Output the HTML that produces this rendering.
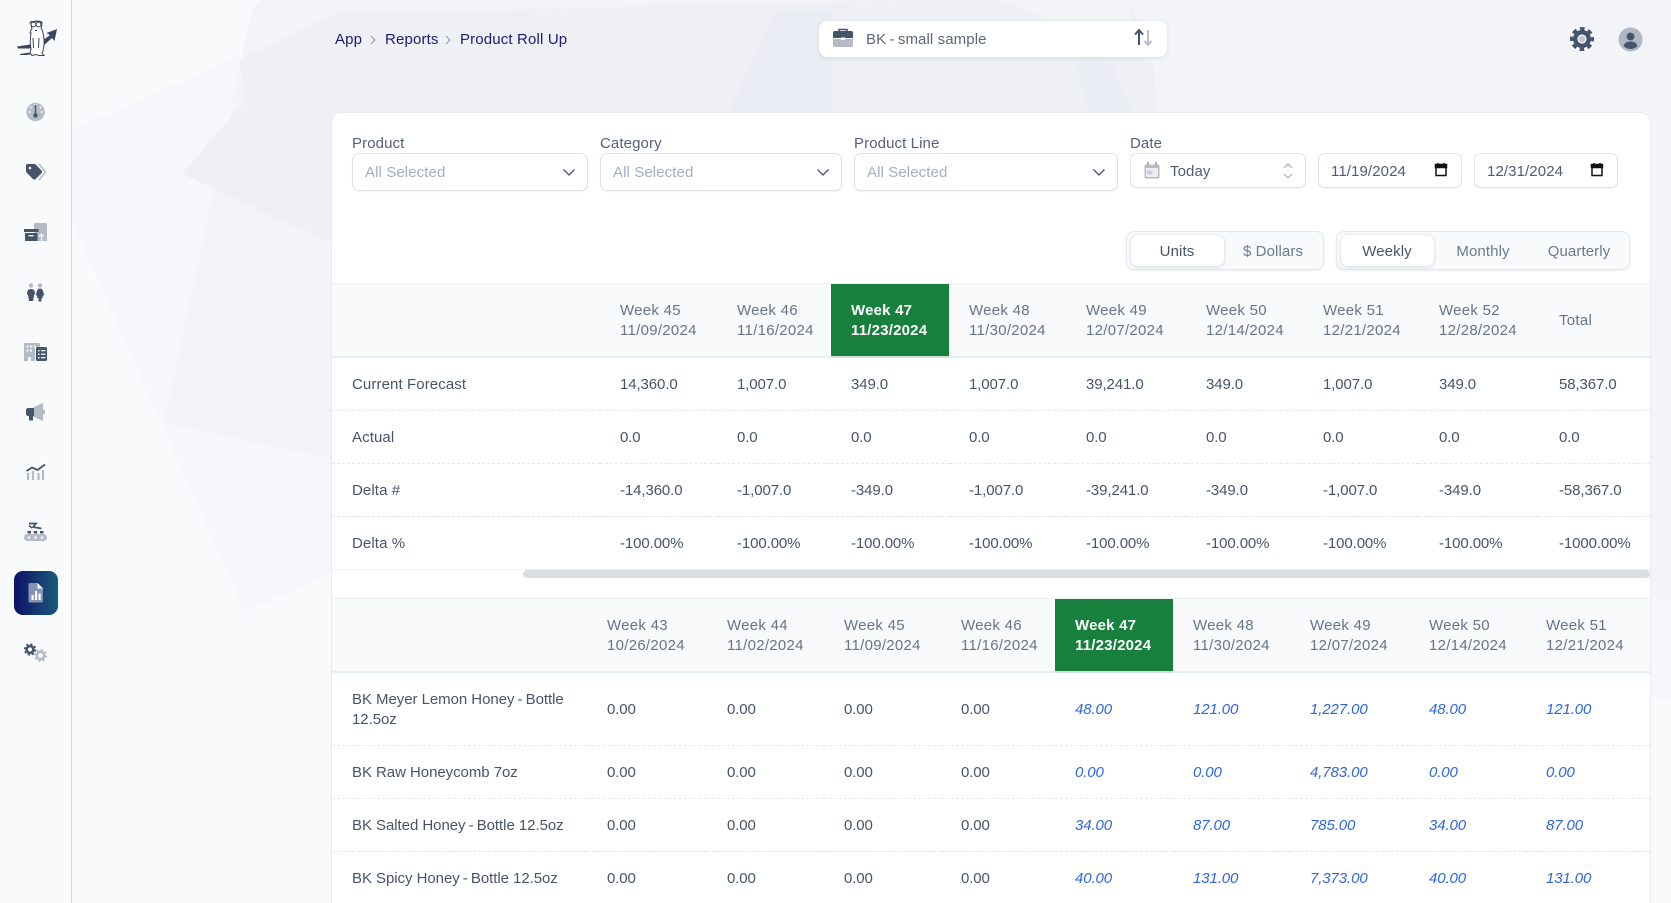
<!DOCTYPE html>
<html lang="en"><head><meta charset="utf-8"><title>Product Roll Up</title>
<style>
*{box-sizing:content-box}
html,body{margin:0;padding:0;width:1671px;height:903px;overflow:hidden;background:#f9fafc;font-family:"Liberation Sans",sans-serif;font-size:15px;color:#475569;letter-spacing:.1px}
#page{position:relative;width:1671px;height:903px;overflow:hidden}
.abs{position:absolute}
#bg{position:absolute;left:0;top:0}
#side{position:absolute;left:0;top:0;width:71px;height:903px;background:#f9fafc;border-right:1px solid #d3d8e3}
#side svg{position:absolute;left:0;top:0}
.tile{position:absolute;left:14px;top:571px;width:44px;height:44px;border-radius:9px;background:linear-gradient(90deg,#0e1266,#1a5a7c)}
.crumb{position:absolute;top:31px;line-height:18px;color:#1b1b6f;letter-spacing:.15px;white-space:nowrap}
#sel{position:absolute;left:819px;top:21px;width:348px;height:36px;background:#fff;border-radius:8px;box-shadow:0 1px 4px rgba(100,116,139,.18)}
#sel span{position:absolute;left:47px;top:10px;line-height:18px;color:#5b677b;letter-spacing:.1px}
#sel span u{position:static;text-decoration:none;word-spacing:-1px}
#card{position:absolute;left:332px;top:113px;width:1318px;height:790px;background:#fff;border-radius:9px 9px 0 0;box-shadow:0 0 0 1px #e7eaf2;overflow:visible}
.lbl{position:absolute;top:22px;line-height:18px;color:#556277}
.inp{position:absolute;top:40px;height:36px;background:#fff;border:1px solid #dfe3ec;border-radius:7px;box-shadow:0 1px 1px rgba(100,116,139,.08)}
.sl{border-color:#e3dfe4;height:36px}
.inp span{position:absolute;top:9px;line-height:20px;white-space:nowrap}
.ph{left:12px;color:#a3afc2}
.dt{color:#505d72}
.inp svg{position:absolute}
.grp{position:absolute;top:118px;height:37px;background:#f8fafc;border:1px solid #e3e7ef;border-radius:8px;box-shadow:0 1px 2px rgba(100,116,139,.12)}
.grp b{position:absolute;top:2px;height:31px;background:#fff;border:1px solid #e6e9f0;border-radius:8px;box-shadow:0 1px 2px rgba(100,116,139,.15)}
.tg{position:absolute;top:129px;line-height:20px;color:#6b7a90;transform:translateX(-50%);white-space:nowrap}
.tg.on{color:#475569}
table{position:absolute;left:0;border-collapse:separate;border-spacing:0;table-layout:fixed;width:1318px}
th{height:70px;padding:2px 0 0 20px;background:#f8fafc;border-top:1px solid #edf0f5;border-bottom:2px solid #e9edf5;text-align:left;font-weight:400;color:#677489;line-height:20px;white-space:nowrap;overflow:hidden;letter-spacing:.28px}
th.g{background:#17803d;color:#fff;font-weight:700;border-top-color:#edf0f5;border-bottom-color:#cfe0d6;letter-spacing:.2px}
td{padding:2px 0 0 20px;border-bottom:1px dashed #e4e7ec;line-height:20px;height:50px;white-space:nowrap;overflow:hidden;letter-spacing:-.1px}
td.l{letter-spacing:.1px}
td.p{letter-spacing:-.05px}
td.p u{text-decoration:none;word-spacing:-1px}
tr.tall td{height:70px}
td.f{font-style:italic;color:#2f65e0}
tr.last td{border-bottom:1px solid #eef0f5}
#bar{position:absolute;left:191px;top:457px;width:1127px;height:8px;border-radius:4px;background:#dcdde2}
</style></head><body><div id="page">
<svg id="bg" width="1671" height="903" viewBox="0 0 1671 903">
<rect width="1671" height="903" fill="#f9fafc"/>
<polygon points="72,130 334,14 360,0 1671,0 1671,700 332,573 245,612 72,222" fill="#f6f7fb"/>
<polygon points="252,10 260,0 1671,0 1671,600 332,459 164,423" fill="#f3f4f9"/>
<polygon points="182,174 252,92 300,60 420,30 560,35 700,100 780,113 332,243" fill="#eff0f5"/>
<polygon points="240,60 334,14 900,0 1150,0 1156,113 332,243 258,210" fill="#eff0f5"/>
<polygon points="728,113 776,10 832,10 833,113" fill="#ebedf5"/>
<polygon points="1073,58 1110,58 1132,113 1090,113" fill="#ebedf5"/>
<polygon points="1130,0 1500,0 1671,60 1671,113 1260,113 1150,60" fill="#f3f5f9"/>
<polygon points="1000,0 1130,0 1130,20 1120,48" fill="#f3f5f9"/>
</svg>

<div id="side">
<div class="tile"></div>
<svg width="71" height="903" viewBox="0 0 71 903">
<!-- logo -->
<path d="M17 46.500 L30 44.500 L42 41 L50 35 L46.500 33 L57 29 L54.500 41 L52 38 L43 46 L30 48.500 L18 48.500Z" fill="#3a4660"/>
<path d="M31 33c-1 6-1 11 0 16l-1 4-10 1.500h5l6-.5 1 1.500 4-1 3 1h5l-2-2.500 1-2c1.500-6 1.500-12 0-18-1-4-2-5-2-5l1-3c0-2-1-4-5-4s-6 2-6 4l1 4c-1 1-1.500 2-2 4z" fill="#fff" stroke="#39445c" stroke-width="1"/>
<circle cx="33.500" cy="24.500" r="2.400" fill="#fff" stroke="#39445c"/><circle cx="38.500" cy="24.500" r="2.400" fill="#fff" stroke="#39445c"/>
<path d="M29.500 23.500l1.500-2h10l1.500 2M35 30.500h2M33 38l.5 10M39 38l-.5 10" stroke="#39445c" stroke-width="1" fill="none"/>
<!-- gauge -->
<circle cx="35.500" cy="112" r="9.200" fill="#b5bbc6"/>
<g fill="#f4f5f8"><circle cx="35.500" cy="105" r="1"/><circle cx="30.500" cy="107.500" r="1"/><circle cx="40.500" cy="107.500" r="1"/><circle cx="29.500" cy="112" r="1"/><circle cx="41.500" cy="112" r="1"/></g>
<path d="M35.500 105V114" stroke="#44546a" stroke-width="1.400"/><circle cx="35.500" cy="115.500" r="2.200" fill="#44546a"/>
<!-- tags -->
<path d="M39 164l6.500 8-6.500 8" fill="none" stroke="#b5bbc6" stroke-width="1.600"/>
<path d="M27.500 164h6.500c.8 0 1.500.3 2 .9l5.500 5.600c.8.800.8 2 0 2.800l-5.800 5.700c-.8.800-2 .8-2.800 0l-6.300-6.400c-.4-.5-.6-1-.6-1.600v-5c0-1.100.4-2 1.500-2z" fill="#44546a"/>
<circle cx="30" cy="168" r="1.300" fill="#f4f5f8"/>
<!-- boxes -->
<path d="M35 223h11c.6 0 1 .4 1 1v17H34V224c0-.6.4-1 1-1z" fill="#b5bbc6"/>
<path d="M41.500 240.500v-6M39 236.500l2.500-2.500 2.500 2.500" stroke="#f4f5f8" stroke-width="1.300" fill="none"/>
<rect x="24" y="229" width="14.500" height="3" fill="#44546a"/><rect x="25" y="233" width="12.500" height="8" fill="#44546a"/>
<rect x="28.500" y="235" width="5" height="1.400" fill="#f4f5f8"/>
<!-- people -->
<circle cx="31" cy="285.500" r="2.200" fill="#b5bbc6"/><circle cx="40" cy="285.500" r="2.200" fill="#b5bbc6"/>
<path d="M27 294c0-3 1-5 4-5s4 2 4 5l-1 1v1l-1 5h-4l-1-6z" fill="#44546a"/>
<path d="M40 288.500c2.500 0 3 2 4.200 6.500l-1.700 1 .5 2h-1.500v3.500h-3V298h-1.500l.5-2-1.700-1c1.200-4.500 1.700-6.500 4.200-6.500z" fill="#44546a"/>
<!-- building -->
<path d="M25.500 343h13c.8 0 1.500.7 1.500 1.500V347h-3.500c-1 0-1.500.7-1.500 1.500V361h-4v-4h-3v4h-4v-16.500c0-.8.700-1.500 1.500-1.500z" fill="#b5bbc6"/>
<g fill="#f4f5f8"><rect x="26.500" y="345.500" width="2" height="2"/><rect x="30" y="345.500" width="2" height="2"/><rect x="33.500" y="345.500" width="2" height="2"/><rect x="26.500" y="349.500" width="2" height="2"/><rect x="30" y="349.500" width="2" height="2"/></g>
<rect x="36" y="347" width="11" height="14" rx="1.500" fill="#44546a"/>
<g fill="#f4f5f8"><rect x="38" y="350" width="1.500" height="1.500"/><rect x="41" y="350" width="4.500" height="1.300"/><rect x="38" y="353.500" width="1.500" height="1.500"/><rect x="41" y="353.500" width="4.500" height="1.300"/><rect x="38" y="357" width="1.500" height="1.500"/><rect x="41" y="357" width="4.500" height="1.300"/></g>
<!-- megaphone -->
<path d="M33 407.500l10-4.500v18l-10-4.500z" fill="#b5bbc6"/><rect x="43" y="409.500" width="2" height="5" rx="1" fill="#b5bbc6"/>
<path d="M28 408h6v8h-1v4.500h-4V416h-1c-1 0-2-1-2-2v-4c0-1 1-2 2-2z" fill="#44546a"/>
<!-- chart -->
<path d="M28 480v-7M33 480v-9M38.500 480v-7M43 480v-10" stroke="#b5bbc6" stroke-width="2.200"/>
<path d="M26.500 471l5.500-3.500 5.500 2.500 7.500-5.500" fill="none" stroke="#44546a" stroke-width="1.800"/>
<!-- conveyor -->
<rect x="24" y="534" width="23" height="7" rx="3.500" fill="#b5bbc6"/>
<g fill="#f4f5f8"><circle cx="29" cy="537.500" r="1.300"/><circle cx="35.500" cy="537.500" r="1.300"/><circle cx="42" cy="537.500" r="1.300"/></g>
<g fill="#44546a"><rect x="27.500" y="531" width="3.500" height="2.500"/><rect x="33.700" y="531" width="3.500" height="2.500"/><rect x="40" y="531" width="3.500" height="2.500"/></g>
<path d="M29 523.500h7l-3 3.500 8.500 1.500M29 525.500l3 2.500" fill="none" stroke="#44546a" stroke-width="1.700"/>
<!-- report -->
<path d="M30 583h7.500l5.500 5.500V601c0 1-.6 1.500-1.500 1.500H30c-.9 0-1.500-.5-1.500-1.500V584.500c0-1 .6-1.500 1.500-1.500z" fill="#8593b4"/>
<path d="M37.500 583l5.500 5.500h-5.500z" fill="#fff"/>
<g fill="#fff"><rect x="31.500" y="595" width="2.200" height="5"/><rect x="35" y="591" width="2.200" height="9"/><rect x="38.500" y="593.500" width="2.200" height="6.500"/></g>
<!-- cogs -->
<circle cx="40.500" cy="655.500" r="3.700" fill="none" stroke="#b5bbc6" stroke-width="2.600"/>
<circle cx="40.500" cy="655.500" r="5.600" fill="none" stroke="#b5bbc6" stroke-width="1.800" stroke-dasharray="2.200 2.200"/>
<circle cx="30" cy="649.500" r="3.400" fill="none" stroke="#44546a" stroke-width="2.600"/>
<circle cx="30" cy="649.500" r="5.300" fill="none" stroke="#44546a" stroke-width="1.800" stroke-dasharray="2.100 2.100"/>
</svg>
</div>

<div class="crumb" style="left:335px">App</div>
<svg class="abs" style="left:369px;top:35px" width="8" height="10"><path d="M2 1l4 4-4 4" fill="none" stroke="#8a93a5" stroke-width="1"/></svg>
<div class="crumb" style="left:385px">Reports</div>
<svg class="abs" style="left:444px;top:35px" width="8" height="10"><path d="M2 1l4 4-4 4" fill="none" stroke="#8a93a5" stroke-width="1"/></svg>
<div class="crumb" style="left:460px">Product Roll Up</div>

<div id="sel"><span>BK<u> - </u>small sample</span>
<svg class="abs" style="left:13px;top:7px" width="22" height="20" viewBox="0 0 22 20">
<path d="M7 3V1.500h8V3" fill="none" stroke="#44546a" stroke-width="1.600"/>
<path d="M2.500 3h17c.8 0 1.500.7 1.500 1.500V10H1V4.500C1 3.700 1.700 3 2.500 3z" fill="#44546a"/>
<path d="M1 11h20v6.500c0 .8-.7 1.500-1.500 1.500h-17C1.700 19 1 18.300 1 17.500z" fill="#b5bbc6"/>
<rect x="9" y="9.500" width="4" height="2.500" fill="#fff"/></svg>
<svg class="abs" style="left:314px;top:7px" width="22" height="20" viewBox="0 0 22 20">
<path d="M6 17V2M2 6.500L6 2l4 4.500" fill="none" stroke="#44546a" stroke-width="2"/>
<path d="M15 2v15M11.500 13l3.500 4 3.500-4" fill="none" stroke="#b5bbc6" stroke-width="1.800"/></svg>
</div>

<svg class="abs" style="left:1569px;top:26px" width="26" height="26" viewBox="0 0 26 26">
<circle cx="13" cy="13" r="6.800" fill="none" stroke="#44546a" stroke-width="4.400"/>
<circle cx="13" cy="13" r="10.300" fill="none" stroke="#44546a" stroke-width="3.400" stroke-dasharray="4.500 3.590" stroke-dashoffset="2.250"/>
<circle cx="13" cy="13" r="3.200" fill="#c0c6d0"/></svg>
<svg class="abs" style="left:1618px;top:27px" width="25" height="25" viewBox="0 0 25 25">
<circle cx="12.500" cy="12.500" r="12" fill="#b0b6c2"/>
<circle cx="12.500" cy="9.500" r="3.900" fill="#44546a"/>
<path d="M5.500 19c1-3 3.500-4.500 7-4.500s6 1.500 7 4.500c-2 2-4.500 3-7 3s-5-1-7-3z" fill="#44546a"/></svg>

<div id="card">
<div class="lbl" style="left:20px">Product</div>
<div class="inp sl" style="left:20px;width:234px"><span class="ph">All Selected</span>
<svg style="left:209px;top:14px" width="14" height="9"><path d="M1.500 1.500L7 7l5.500-5.500" fill="none" stroke="#44546a" stroke-width="1.300"/></svg></div>
<div class="lbl" style="left:268px">Category</div>
<div class="inp sl" style="left:268px;width:240px"><span class="ph">All Selected</span>
<svg style="left:215px;top:14px" width="14" height="9"><path d="M1.500 1.500L7 7l5.500-5.500" fill="none" stroke="#44546a" stroke-width="1.300"/></svg></div>
<div class="lbl" style="left:522px">Product Line</div>
<div class="inp sl" style="left:522px;width:262px"><span class="ph">All Selected</span>
<svg style="left:237px;top:14px" width="14" height="9"><path d="M1.500 1.500L7 7l5.500-5.500" fill="none" stroke="#44546a" stroke-width="1.300"/></svg></div>
<div class="lbl" style="left:798px">Date</div>
<div class="inp" style="left:798px;width:174px;height:33px"><span class="dt" style="left:39px;top:8px">Today</span>
<svg style="left:13px;top:8px" width="17" height="18" viewBox="0 0 17 18"><rect x=".5" y="2.500" width="15" height="14" rx="2" fill="#b5bbc6"/><rect x="2" y="6" width="12" height="9" fill="#eceef2"/><rect x="3" y="8.500" width="5.500" height="4" fill="#b5bbc6" opacity=".6"/><path d="M4 0v3M12 0v3" stroke="#8d96a6" stroke-width="1.500"/></svg>
<svg style="left:151px;top:8px" width="12" height="18" viewBox="0 0 12 18"><path d="M2 6l4-4 4 4" fill="none" stroke="#a6aebb" stroke-width="1.200"/><path d="M2 12l4 4 4-4" fill="none" stroke="#a6aebb" stroke-width="1.200"/></svg></div>
<div class="inp" style="left:986px;width:142px;height:33px"><span class="dt" style="left:12px;top:8px">11/19/2024</span>
<svg style="left:115px;top:9px" width="14" height="14" viewBox="0 0 14 14"><path d="M2 1.500h10v11H2zM1.500 1.500h11v3h-11zM4 0v2M10 0v2" fill="none" stroke="#111" stroke-width="1.500"/><rect x="2" y="2" width="10" height="2.500" fill="#111"/></svg></div>
<div class="inp" style="left:1142px;width:142px;height:33px"><span class="dt" style="left:12px;top:8px">12/31/2024</span>
<svg style="left:115px;top:9px" width="14" height="14" viewBox="0 0 14 14"><path d="M2 1.500h10v11H2zM1.500 1.500h11v3h-11zM4 0v2M10 0v2" fill="none" stroke="#111" stroke-width="1.500"/><rect x="2" y="2" width="10" height="2.500" fill="#111"/></svg></div>

<div class="grp" style="left:794px;width:196px"><b style="left:3px;width:93px"></b></div>
<div class="tg on" style="left:845px">Units</div><div class="tg" style="left:941px">$ Dollars</div>
<div class="grp" style="left:1004px;width:292px"><b style="left:3px;width:93px"></b></div>
<div class="tg on" style="left:1055px">Weekly</div><div class="tg" style="left:1151px">Monthly</div><div class="tg" style="left:1247px">Quarterly</div>

<table style="top:170px">
<colgroup><col style="width:268px"><col style="width:117px"><col style="width:114px"><col style="width:118px"><col style="width:117px"><col style="width:120px"><col style="width:117px"><col style="width:116px"><col style="width:120px"><col style="width:111px"></colgroup>
<tr><th></th><th>Week 45<br>11/09/2024</th><th>Week 46<br>11/16/2024</th><th class="g">Week 47<br>11/23/2024</th><th>Week 48<br>11/30/2024</th><th>Week 49<br>12/07/2024</th><th>Week 50<br>12/14/2024</th><th>Week 51<br>12/21/2024</th><th>Week 52<br>12/28/2024</th><th>Total</th></tr>
<tr><td class="l">Current Forecast</td><td>14,360.0</td><td>1,007.0</td><td>349.0</td><td>1,007.0</td><td>39,241.0</td><td>349.0</td><td>1,007.0</td><td>349.0</td><td>58,367.0</td></tr>
<tr><td class="l">Actual</td><td>0.0</td><td>0.0</td><td>0.0</td><td>0.0</td><td>0.0</td><td>0.0</td><td>0.0</td><td>0.0</td><td>0.0</td></tr>
<tr><td class="l">Delta #</td><td>-14,360.0</td><td>-1,007.0</td><td>-349.0</td><td>-1,007.0</td><td>-39,241.0</td><td>-349.0</td><td>-1,007.0</td><td>-349.0</td><td>-58,367.0</td></tr>
<tr class="last"><td class="l">Delta %</td><td>-100.00%</td><td>-100.00%</td><td>-100.00%</td><td>-100.00%</td><td>-100.00%</td><td>-100.00%</td><td>-100.00%</td><td>-100.00%</td><td>-1000.00%</td></tr>
</table>
<div id="bar"></div>

<div style="position:absolute;left:0;top:0;width:1318px;height:790px;overflow:hidden">
<table style="top:485px">
<colgroup><col style="width:255px"><col style="width:120px"><col style="width:117px"><col style="width:117px"><col style="width:114px"><col style="width:118px"><col style="width:117px"><col style="width:119px"><col style="width:117px"><col style="width:124px"></colgroup>
<tr><th></th><th>Week 43<br>10/26/2024</th><th>Week 44<br>11/02/2024</th><th>Week 45<br>11/09/2024</th><th>Week 46<br>11/16/2024</th><th class="g">Week 47<br>11/23/2024</th><th>Week 48<br>11/30/2024</th><th>Week 49<br>12/07/2024</th><th>Week 50<br>12/14/2024</th><th>Week 51<br>12/21/2024</th></tr>
<tr class="tall"><td class="p">BK Meyer Lemon Honey<u> - </u>Bottle<br>12.5oz</td><td>0.00</td><td>0.00</td><td>0.00</td><td>0.00</td><td class="f">48.00</td><td class="f">121.00</td><td class="f">1,227.00</td><td class="f">48.00</td><td class="f">121.00</td></tr>
<tr><td class="p">BK Raw Honeycomb 7oz</td><td>0.00</td><td>0.00</td><td>0.00</td><td>0.00</td><td class="f">0.00</td><td class="f">0.00</td><td class="f">4,783.00</td><td class="f">0.00</td><td class="f">0.00</td></tr>
<tr><td class="p">BK Salted Honey<u> - </u>Bottle 12.5oz</td><td>0.00</td><td>0.00</td><td>0.00</td><td>0.00</td><td class="f">34.00</td><td class="f">87.00</td><td class="f">785.00</td><td class="f">34.00</td><td class="f">87.00</td></tr>
<tr><td class="p">BK Spicy Honey<u> - </u>Bottle 12.5oz</td><td>0.00</td><td>0.00</td><td>0.00</td><td>0.00</td><td class="f">40.00</td><td class="f">131.00</td><td class="f">7,373.00</td><td class="f">40.00</td><td class="f">131.00</td></tr>
</table>
</div>
</div>
</div></body></html>
